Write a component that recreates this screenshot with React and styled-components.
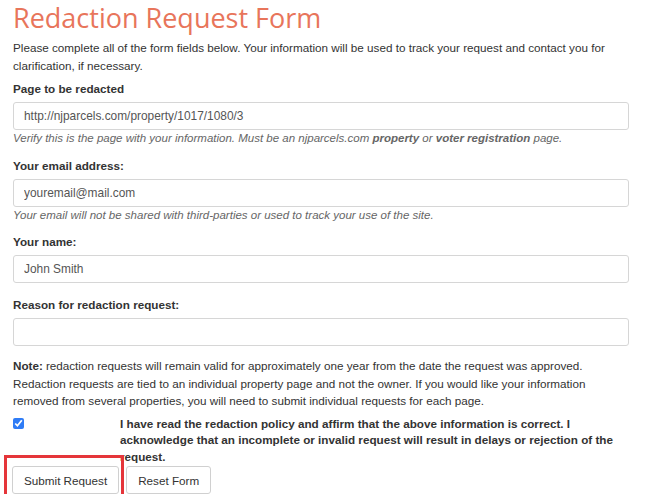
import React from "react";
import styled, { createGlobalStyle } from "styled-components";

const GlobalStyle = createGlobalStyle`
  body {
    margin: 0;
    background: #fff;
    font-family: "Liberation Sans", Arial, sans-serif;
    font-size: 11.7px;
    color: #333;
  }
`;

function App() {
  return (
    <>
      <GlobalStyle />
      <Page>
        <Title>Redaction Request Form</Title>
        <Intro>
          Please complete all of the form fields below. Your information will be used to track your
          request and contact you for clarification, if necessary.
        </Intro>

        <Field $gap={11}>
          <Label>Page to be redacted</Label>
          <Input defaultValue="http://njparcels.com/property/1017/1080/3" />
          <Help>
            Verify this is the page with your information. Must be an njparcels.com{" "}
            <b>property</b> or <b>voter registration</b> page.
          </Help>
        </Field>

        <Field $gap={10}>
          <Label>Your email address:</Label>
          <Input defaultValue="youremail@mail.com" />
          <Help>Your email will not be shared with third-parties or used to track your use of the site.</Help>
        </Field>

        <Field $gap={13}>
          <Label>Your name:</Label>
          <Input defaultValue="John Smith" />
        </Field>

        <Field $gap={11}>
          <Label>Reason for redaction request:</Label>
          <Input defaultValue="" />
        </Field>

        <Note>
          <NoteLead>Note:</NoteLead>redaction requests will remain valid for approximately one year
          from the date the request was approved. Redaction requests are tied to an individual property
          page and not the owner. If you would like your information removed from several properties,
          you will need to submit individual requests for each page.
        </Note>

        <AgreeRow>
          <CheckCell>
            <Check type="checkbox" defaultChecked />
          </CheckCell>
          <AgreeText>
            I have read the redaction policy and affirm that the above information is correct. I
            acknowledge that an incomplete or invalid request will result in delays or rejection of the
            request.
          </AgreeText>
        </AgreeRow>

        <Buttons>
          <Highlight>
            <Button>Submit Request</Button>
          </Highlight>
          <Button>Reset Form</Button>
        </Buttons>
      </Page>
    </>
  );
}

export default App;

const Page = styled.div`
  width: 616px;
  padding-left: 13px;
`;

const Title = styled.h1`
  margin: 0;
  padding-top: 2px;
  height: 37px;
  font-family: "Open Sans", sans-serif;
  font-weight: 400;
  font-size: 27px;
  line-height: 32px;
  color: #e8755b;
`;

const Intro = styled.p`
  margin: 0 0 5px;
  line-height: 18px;
`;

const Field = styled.div`
  margin-bottom: ${(p) => p.$gap}px;
`;

const Label = styled.label`
  display: block;
  font-weight: bold;
  line-height: 18px;
  margin-bottom: 4px;
`;

const Input = styled.input`
  display: block;
  box-sizing: border-box;
  width: 616px;
  height: 28px;
  margin: 0;
  padding: 0 10px;
  border: 1px solid #d6d6d6;
  border-radius: 3px;
  font-family: "Liberation Sans", Arial, sans-serif;
  font-size: 11.9px;
  color: #555;
  outline: none;
`;

const Help = styled.div`
  font-style: italic;
  font-size: 11.5px;
  line-height: 16px;
  color: #666;
`;

const Note = styled.p`
  margin: 0 0 6px;
  line-height: 17.5px;
`;

const NoteLead = styled.strong`
  font-weight: bold;
  margin-right: 3px;
`;

const AgreeRow = styled.div`
  display: flex;
  margin-bottom: 1px;
`;

const CheckCell = styled.div`
  width: 107px;
  padding-top: 2px;
`;

const Check = styled.input`
  display: block;
  margin: 0;
  width: 11px;
  height: 11px;
  accent-color: #2f7cf6;
`;

const AgreeText = styled.label`
  width: 495px;
  font-weight: bold;
  line-height: 16.5px;
`;

const Buttons = styled.div`
  display: flex;
  align-items: center;
  gap: 7px;
  margin-left: -1px;
`;

/* red annotation box drawn round the submit button; negative margins keep the button in place */
const Highlight = styled.div`
  display: flex;
  border: 3px solid #e5353a;
  padding: 8px 2px 0 5px;
  margin: -11px -5px -3px -8px;
`;

const Button = styled.button`
  box-sizing: border-box;
  height: 28px;
  padding: 0 11px;
  background: #fff;
  border: 1px solid #d0d0d0;
  border-radius: 3px;
  font-family: "Liberation Sans", Arial, sans-serif;
  font-size: 11.7px;
  color: #333;
`;
